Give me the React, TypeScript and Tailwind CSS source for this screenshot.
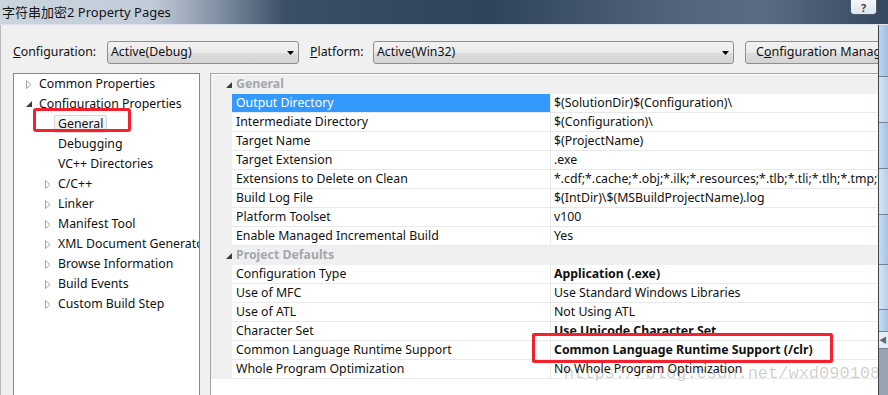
import React from 'react';

type TreeItem = { label: string; level: 1 | 2; expander?: 'open' | 'closed'; selected?: boolean };

const tree: TreeItem[] = [
  { label: 'Common Properties', level: 1, expander: 'closed' },
  { label: 'Configuration Properties', level: 1, expander: 'open' },
  { label: 'General', level: 2, selected: true },
  { label: 'Debugging', level: 2 },
  { label: 'VC++ Directories', level: 2 },
  { label: 'C/C++', level: 2, expander: 'closed' },
  { label: 'Linker', level: 2, expander: 'closed' },
  { label: 'Manifest Tool', level: 2, expander: 'closed' },
  { label: 'XML Document Generator', level: 2, expander: 'closed' },
  { label: 'Browse Information', level: 2, expander: 'closed' },
  { label: 'Build Events', level: 2, expander: 'closed' },
  { label: 'Custom Build Step', level: 2, expander: 'closed' },
];

type Prop = { name: string; value: string; bold?: boolean; selected?: boolean };
type Section = { title: string; props: Prop[] };

const sections: Section[] = [
  {
    title: 'General',
    props: [
      { name: 'Output Directory', value: '$(SolutionDir)$(Configuration)\\', selected: true },
      { name: 'Intermediate Directory', value: '$(Configuration)\\' },
      { name: 'Target Name', value: '$(ProjectName)' },
      { name: 'Target Extension', value: '.exe' },
      {
        name: 'Extensions to Delete on Clean',
        value: '*.cdf;*.cache;*.obj;*.ilk;*.resources;*.tlb;*.tli;*.tlh;*.tmp;*.rsp;*.pgc;*.pgd;*.meta;$(TargetPath)',
      },
      { name: 'Build Log File', value: '$(IntDir)\\$(MSBuildProjectName).log' },
      { name: 'Platform Toolset', value: 'v100' },
      { name: 'Enable Managed Incremental Build', value: 'Yes' },
    ],
  },
  {
    title: 'Project Defaults',
    props: [
      { name: 'Configuration Type', value: 'Application (.exe)', bold: true },
      { name: 'Use of MFC', value: 'Use Standard Windows Libraries' },
      { name: 'Use of ATL', value: 'Not Using ATL' },
      { name: 'Character Set', value: 'Use Unicode Character Set', bold: true },
      { name: 'Common Language Runtime Support', value: 'Common Language Runtime Support (/clr)', bold: true },
      { name: 'Whole Program Optimization', value: 'No Whole Program Optimization' },
    ],
  },
];

const ClosedArrow = () => (
  <svg width="6" height="9" viewBox="0 0 6 9">
    <path d="M0.5 0.5 L5 4.5 L0.5 8.5 Z" fill="#fff" stroke="#a6a6a6" strokeWidth="1" />
  </svg>
);

const OpenArrow = () => (
  <svg width="6" height="6" viewBox="0 0 6 6">
    <path d="M6 0 L6 6 L0 6 Z" fill="#3c3c3c" />
  </svg>
);

const DropArrow = () => (
  <svg width="7" height="4" viewBox="0 0 7 4">
    <path d="M0 0 L7 0 L3.5 4 Z" fill="#000" />
  </svg>
);

const comboCls =
  'h-[23px] shrink-0 flex items-center justify-between pl-[3px] pr-[4px] rounded-[3px] border border-[#8e8f8f] bg-[linear-gradient(180deg,#f2f2f2_0%,#ebebeb_50%,#dddddd_51%,#d4d4d4_100%)]';

export default function App() {
  return (
    <div className="relative w-[888px] h-[395px] overflow-hidden flex flex-col font-['Noto_Sans','Noto_Sans_CJK_SC',sans-serif] text-[12.3px] text-[#111]">
      {/* Title bar */}
      <div className="h-[25px] shrink-0 flex items-start justify-between border-b border-[#dfe4ea] bg-[linear-gradient(90deg,#cbd5df_0%,#c2ccd8_17%,#8595a7_24%,#3b4f66_32%,#2f435a_55%,#51647a_76%,#5a6c81_86%,#34475d_100%)]">
        <span className="pl-[2px] pt-[3px] text-[13px] leading-[18px] text-[#141414]">
          字符串加密2 Property Pages
        </span>
        <div className="mr-[11px] w-[27px] h-[15px] flex items-center justify-center rounded-b-[4px] border border-t-0 border-[#4f5e70] bg-[linear-gradient(180deg,#f4f6f8_0%,#dfe5ec_100%)] text-[11px] font-bold leading-none text-[#444]">
          ?
        </div>
      </div>

      <div className="flex flex-1 min-h-0">
        {/* Dialog body */}
        <div className="w-[878px] shrink-0 flex flex-col bg-[#f0f0f0] border-l border-[#b9b9b9] overflow-hidden">
          {/* Configuration row */}
          <div className="flex items-center pt-[16px] pl-[12px] h-[39px] shrink-0">
            <span className="w-[94px] shrink-0">
              <u>C</u>onfiguration:
            </span>
            <div className={`${comboCls} w-[192px]`}>
              <span>Active(Debug)</span>
              <DropArrow />
            </div>
            <span className="ml-[11px] w-[63px] shrink-0">
              <u>P</u>latform:
            </span>
            <div className={`${comboCls} w-[361px]`}>
              <span>Active(Win32)</span>
              <DropArrow />
            </div>
            <div className="ml-[11px] h-[23px] w-[150px] shrink-0 flex items-center pl-[10px] rounded-[3px] border border-[#8e8f8f] bg-[linear-gradient(180deg,#f2f2f2_0%,#ebebeb_50%,#dddddd_51%,#d4d4d4_100%)] whitespace-nowrap text-[12.5px]">
              C<u>o</u>nfiguration Manager...
            </div>
          </div>

          {/* Panels */}
          <div className="flex gap-[10px] pt-[9px] pl-[12px] h-[345px] shrink-0">
            {/* Tree */}
            <div className="w-[187px] shrink-0 bg-white border border-[#828790] overflow-hidden">
              {tree.map((t) => (
                <div
                  key={t.label}
                  className={`h-[20px] flex items-center whitespace-nowrap ${t.level === 1 ? 'pl-[12px]' : 'pl-[31px]'}`}
                >
                  <span className="w-[13px] shrink-0 flex items-center">
                    {t.expander === 'closed' && <ClosedArrow />}
                    {t.expander === 'open' && <OpenArrow />}
                  </span>
                  {t.selected ? (
                    <span className="-ml-[4px] h-[18px] flex items-center px-[3px] rounded-[2px] border border-[#d6d6d6] bg-[linear-gradient(180deg,#fafafa_0%,#ededed_100%)]">
                      {t.label}
                    </span>
                  ) : (
                    <span>{t.label}</span>
                  )}
                </div>
              ))}
            </div>

            {/* Property grid */}
            <div className="flex-1 min-w-0 bg-white border-t border-l border-[#a5a5a5] pt-[1px] overflow-hidden">
              {sections.map((s) => (
                <div key={s.title}>
                  <div className="h-[19px] flex items-center bg-[#f0f0f0]">
                    <span className="w-[25px] shrink-0 flex justify-end pr-[4px]">
                      <OpenArrow />
                    </span>
                    <span className="font-bold text-[#a3a8ae]">{s.title}</span>
                  </div>
                  {s.props.map((p) => (
                    <div key={p.name} className="h-[19px] flex">
                      <div className="w-[21px] shrink-0 bg-[#f0f0f0]" />
                      <div
                        className={`w-[319px] shrink-0 flex items-center pl-[4px] whitespace-nowrap border-r border-b border-[#e9e9e9] ${
                          p.selected ? 'bg-[#3399ff] text-white' : ''
                        }`}
                      >
                        {p.name}
                      </div>
                      <div
                        className={`flex-1 min-w-0 flex items-center pl-[3px] whitespace-nowrap overflow-hidden border-b border-[#e9e9e9] ${
                          p.bold ? 'font-bold' : ''
                        }`}
                      >
                        {p.value}
                      </div>
                    </div>
                  ))}
                </div>
              ))}
            </div>
          </div>
        </div>

        {/* Background window strip */}
        <div className="flex-1 flex flex-col border-l border-[#3b4654] bg-[#dbe8f5]">
          <div className="h-[52px] border-b border-[#6f8296] bg-[linear-gradient(90deg,#bcd5ef,#9dbfe3)]" />
          <div className="h-[46px] border-b border-[#6f8296] bg-[linear-gradient(90deg,#d4e5f7,#b5d0ec)]" />
          <div className="h-[46px] border-b border-[#6f8296] bg-[linear-gradient(90deg,#c5dcf3,#a4c4e6)]" />
          <div className="h-[46px] border-b border-[#6f8296] bg-[linear-gradient(90deg,#d4e5f7,#b5d0ec)]" />
          <div className="h-[50px] border-b border-[#6f8296] bg-[linear-gradient(90deg,#c5dcf3,#a4c4e6)]" />
          <div className="h-[45px] border-b border-[#6f8296] bg-[linear-gradient(90deg,#d4e5f7,#b5d0ec)]" />
          <div className="h-[22px] border-b border-[#6f8296] bg-[linear-gradient(90deg,#c5dcf3,#a4c4e6)]" />
          <div className="h-[17px] border-b border-[#6f8296] bg-[#e6eef7] flex items-center text-[8px] text-[#5a6a7c] leading-none">◀</div>
          <div className="flex-1 bg-[#9aa4b0]" />
        </div>
      </div>

      {/* Red annotation boxes */}
      <div className="absolute left-[33px] top-[108px] w-[98px] h-[24px] border-[3px] border-[#f5222d] rounded-[3px]" />
      <div className="absolute left-[532px] top-[333px] w-[301px] h-[30px] border-[3px] border-[#f5222d] rounded-[2px]" />

      {/* Watermark */}
      <div className="absolute left-[564px] top-[364px] font-['Liberation_Mono',monospace] text-[17px] leading-[20px] text-black/20 whitespace-nowrap">
        https://blog.csdn.net/wxd090108
      </div>
    </div>
  );
}
